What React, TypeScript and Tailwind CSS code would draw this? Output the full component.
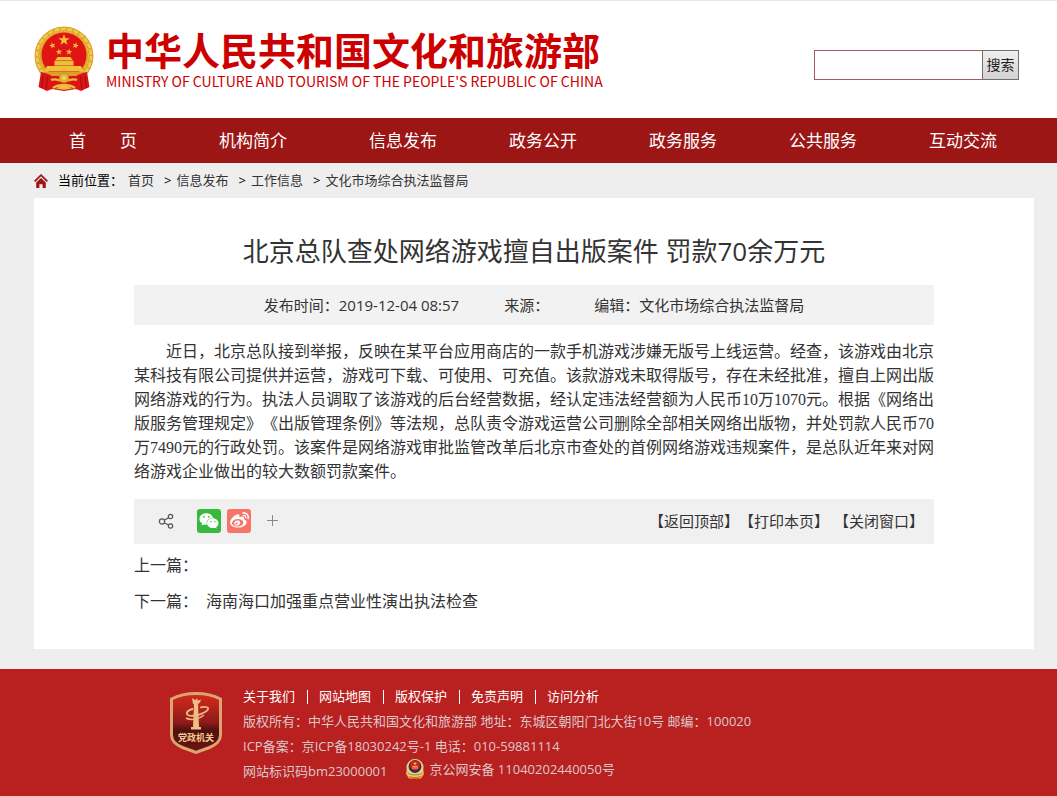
import React from "react";
import { FaWeibo, FaWeixin } from "react-icons/fa";

const NAV_ITEMS = [
  { label: "首　　页", wide: true },
  { label: "机构简介", wide: true },
  { label: "信息发布", wide: false },
  { label: "政务公开", wide: false },
  { label: "政务服务", wide: false },
  { label: "公共服务", wide: false },
  { label: "互动交流", wide: false },
];

const CRUMBS = ["首页", "信息发布", "工作信息", "文化市场综合执法监督局"];

const FOOTER_LINKS = ["关于我们", "网站地图", "版权保护", "免责声明", "访问分析"];

const STAR = "M0-10 2.4-3.1 9.5-3.1 3.8 1.2 5.9 8.1 0 4-5.9 8.1-3.8 1.2-9.5-3.1-2.4-3.1Z";

const NationalEmblem: React.FC = () => (
  <svg viewBox="0 0 60 66" className="h-[66px] w-[60px] shrink-0" aria-hidden="true">
    <circle cx="30" cy="30" r="29.5" fill="#dda52c" />
    <circle cx="30" cy="30" r="27" fill="none" stroke="#f0c84e" strokeWidth="2.600" strokeDasharray="5 1.500" />
    <circle cx="30" cy="30" r="24.500" fill="none" stroke="#e9b93d" strokeWidth="1.200" strokeDasharray="3 2" />
    <circle cx="30" cy="29" r="22.500" fill="#e21313" />
    <g fill="#f0c03a">
      <path d={STAR} transform="translate(30 14) scale(.6)" />
      <path d={STAR} transform="translate(18.500 19.500) rotate(-15) scale(.34)" />
      <path d={STAR} transform="translate(41.500 19.500) rotate(15) scale(.34)" />
      <path d={STAR} transform="translate(25 26) rotate(-8) scale(.34)" />
      <path d={STAR} transform="translate(35 26) rotate(8) scale(.34)" />
      <path d="M23.500 31h13l2.500 3.500H21z" />
      <path d="M20.500 35h19v4.500h-19z" />
      <path d="M13 40h34l2.500 5.500h-39z" />
    </g>
    <path d="M21 34.800h18M20 39.500h20" stroke="#c8891c" strokeWidth=".6" />
    <path d="M11 46h38v5H11z" fill="#d9a02a" />
    <path d="M7 46c5 1 8 2 11 4h24c3-2 6-3 11-4l2.500 15-8.500 4-5-2-12 2-12-2-5 2-8.500-4z" fill="#da1515" />
    <path d="M9 50l-1.500 12M14 50l-2 13M51 50l1.500 12M46 50l2 13" stroke="#ac0d0d" strokeWidth="1.100" />
    <path d="M17 54c5-2 8 1 13 1s8-3 13-1M19 62c3-2 6-3 11-3s8 1 11 3" fill="none" stroke="#ecbb3b" strokeWidth="2.400" />
    <circle cx="30" cy="52" r="4.800" fill="#e7b434" stroke="#be8118" strokeWidth=".6" />
    <circle cx="30" cy="52" r="1.700" fill="#f7dc7c" />
    <path d="M22 62.500c3-2 5-3 8-3s5 1 8 3c-5 1.500-11 1.500-16 0z" fill="#efc041" />
  </svg>
);

const PartyBadge: React.FC = () => (
  <svg viewBox="0 0 52 62" className="mt-2 h-[62px] w-[52px] shrink-0" role="img" aria-label="党政机关">
    <defs>
      <linearGradient id="shield" x1="0" y1="0" x2="0" y2="1">
        <stop offset="0" stopColor="#d62a1c" />
        <stop offset=".5" stopColor="#8e1a1a" />
        <stop offset=".62" stopColor="#4f1111" />
        <stop offset="1" stopColor="#6e1414" />
      </linearGradient>
    </defs>
    <path
      d="M26 1.5C34 1.5 43 3 50.5 7v36c0 7-5 10-11 12.500-5 2-9 3-13.500 5-4.500-2-8.500-3-13.500-5-6-2.500-11-5.500-11-12.500V7C9 3 18 1.500 26 1.500Z"
      fill="url(#shield)"
      stroke="#dba56f"
      strokeWidth="3"
    />
    <g fill="#edbd84">
      <path d="M24 11h4l1 24h-6z" />
      <path d="M22 6l3 2 2-1.500 1 2 3-1-1 3-2 1.500h-5z" />
      <path d="M21 35h10v2.500H21z" />
    </g>
    <path
      d="M23 17c-3 0-7 3-6 5 1 3 11 2 16-1 5-2 7-5 3-6-2-.5-4 0-6 .5"
      fill="none"
      stroke="#edbd84"
      strokeWidth="1.800"
    />
    <path d="M16 26c5 3 14 1 18-3" fill="none" stroke="#edbd84" strokeWidth="1.500" />
    <text
      x="26"
      y="49"
      textAnchor="middle"
      fill="#f4c98f"
      className="font-['Noto_Sans_CJK_SC',sans-serif] text-[9px] font-bold"
    >
      党政机关
    </text>
  </svg>
);

const PoliceBadge: React.FC = () => (
  <svg viewBox="0 0 20 20" className="h-5 w-5" aria-hidden="true">
    <path d="M2 9 1 15l3 4.500h12l3-4.500-1-6z" fill="#e8b653" />
    <circle cx="10" cy="8.500" r="8.500" fill="#f1cf82" />
    <circle cx="10" cy="7.500" r="6.400" fill="#27305f" />
    <circle cx="10" cy="6.500" r="4.800" fill="#dc2418" />
    <path d={STAR} transform="translate(10 4.500) scale(.18)" fill="#f7d358" />
    <path d="M7.500 7.500h5M7 9h6" stroke="#f7d358" strokeWidth=".8" />
    <path d="M3 13c3 3 11 3 14 0v4c-4 2-10 2-14 0z" fill="#efc56c" />
    <path d="M3 14c3 2.500 11 2.500 14 0M4 17.500c4 1.500 8 1.500 12 0" fill="none" stroke="#a96d1e" strokeWidth=".8" />
  </svg>
);

const HomeIcon: React.FC = () => (
  <svg viewBox="0 0 14 14" className="mr-[10px] h-[14px] w-[14px]" aria-hidden="true">
    <path d="M.6 7.400 7 1.200l6.400 6.200" fill="none" stroke="#a01616" strokeWidth="1.800" />
    <path d="M2.200 8.500 7 4l4.800 4.500V14H8.600v-3.800H5.400V14H2.200z" fill="#a01616" />
  </svg>
);

const ShareIcon: React.FC = () => (
  <svg viewBox="0 0 16 16" className="h-4 w-4" fill="none" stroke="#555" strokeWidth="1.200" aria-hidden="true">
    <circle cx="4" cy="8.500" r="2.600" />
    <circle cx="12.500" cy="3.500" r="2.200" />
    <circle cx="12.500" cy="13" r="2.200" />
    <path d="M6.300 7.200l4.200-2.500M6.300 9.800l4.200 2.200" />
  </svg>
);

const Header: React.FC = () => (
  <header className="flex h-[118px] items-start justify-between border-t border-[#e8e8e8] bg-white pr-[38px] pl-[34px]">
    <a href="#" className="mt-[25px] flex text-[#cc0000]">
      <NationalEmblem />
      <span className="ml-3 block font-['Noto_Sans_CJK_SC',sans-serif] whitespace-nowrap">
        <span className="block text-[38px] leading-[46px] font-bold">中华人民共和国文化和旅游部</span>
        <span className="block text-sm leading-[18px]">
          MINISTRY OF CULTURE AND TOURISM OF THE PEOPLE'S REPUBLIC OF CHINA
        </span>
      </span>
    </a>
    <form className="mt-[49px] flex" onSubmit={(e) => e.preventDefault()}>
      <input
        type="text"
        aria-label="搜索"
        className="h-[30px] w-[168px] border border-r-0 border-[#a85a60] bg-white px-2 text-sm outline-none"
      />
      <button
        type="submit"
        className="h-[30px] w-[37px] border border-[#707070] bg-linear-to-b from-[#f0f0f0] to-[#d2d2d2] text-sm text-[#222]"
      >
        搜索
      </button>
    </form>
  </header>
);

const Nav: React.FC = () => (
  <nav className="bg-[#9c1616] pr-[23px] pl-[34px]">
    <ul className="flex h-[45px] items-center gap-[72px] pl-[35px] text-[17px] whitespace-nowrap text-white">
      {NAV_ITEMS.map((item) => (
        <li key={item.label} className={item.wide ? "mr-[10px]" : ""}>
          <a href="#">{item.label}</a>
        </li>
      ))}
    </ul>
  </nav>
);

const Breadcrumb: React.FC = () => (
  <div className="flex h-[35px] items-center text-[13px] whitespace-nowrap text-black">
    <HomeIcon />
    <span className="mr-[5px]">当前位置：</span>
    {CRUMBS.map((crumb, i) => (
      <React.Fragment key={crumb}>
        {i > 0 && <span className="mr-[5px] ml-[10px]">&gt;</span>}
        <a href="#" className="text-[#333]">
          {crumb}
        </a>
      </React.Fragment>
    ))}
  </div>
);

const ShareBar: React.FC = () => (
  <div className="mt-[15px] flex h-[45px] items-center justify-between bg-[#f0f0f0] pr-[10px] pl-6">
    <div className="flex items-center pb-0.5">
      <button type="button" aria-label="分享">
        <ShareIcon />
      </button>
      <button
        type="button"
        aria-label="微信"
        className="ml-[23px] flex h-6 w-6 items-center justify-center rounded-[3px] bg-[#36b93d] text-white"
      >
        <FaWeixin size={20} />
      </button>
      <button
        type="button"
        aria-label="微博"
        className="ml-[6px] flex h-6 w-6 items-center justify-center rounded-[3px] bg-[#f77567] text-white"
      >
        <FaWeibo size={19} />
      </button>
      <button type="button" aria-label="更多" className="ml-4">
        <svg viewBox="0 0 11 11" className="h-[11px] w-[11px]" stroke="#888" aria-hidden="true">
          <path d="M5.500 0v11M0 5.500h11" />
        </svg>
      </button>
    </div>
    <div className="flex text-[15px]">
      <button type="button">【返回顶部】</button>
      <button type="button">【打印本页】</button>
      <button type="button" className="ml-[5px]">
        【关闭窗口】
      </button>
    </div>
  </div>
);

const Article: React.FC = () => (
  <main className="bg-white px-[100px] pt-[34px] pb-[30px] text-[#333]">
    <h1 className="text-center text-[26px] leading-[38px]">北京总队查处网络游戏擅自出版案件 罚款70余万元</h1>
    <div className="mt-[15px] flex h-10 items-center justify-center gap-[45px] bg-[#f2f2f2] text-[15px]">
      <span>发布时间：2019-12-04 08:57</span>
      <span>来源：</span>
      <span>编辑：文化市场综合执法监督局</span>
    </div>
    <p className="mt-[15px] text-justify indent-8 font-['Liberation_Serif','Noto_Sans_CJK_SC',serif] text-base leading-6">
      近日，北京总队接到举报，反映在某平台应用商店的一款手机游戏涉嫌无版号上线运营。经查，该游戏由北京某科技有限公司提供并运营，游戏可下载、可使用、可充值。该款游戏未取得版号，存在未经批准，擅自上网出版网络游戏的行为。执法人员调取了该游戏的后台经营数据，经认定违法经营额为人民币10万1070元。根据《网络出版服务管理规定》《出版管理条例》等法规，总队责令游戏运营公司删除全部相关网络出版物，并处罚款人民币70万7490元的行政处罚。该案件是网络游戏审批监管改革后北京市查处的首例网络游戏违规案件，是总队近年来对网络游戏企业做出的较大数额罚款案件。
    </p>
    <ShareBar />
    <div className="mt-[3px] text-base leading-9">
      <p>上一篇：</p>
      <p>
        下一篇：
        <a href="#" className="ml-2">
          海南海口加强重点营业性演出执法检查
        </a>
      </p>
    </div>
  </main>
);

const Footer: React.FC = () => (
  <footer className="mt-5 flex bg-[#b92020] pt-[15px] pb-3 pl-[170px] text-[13px] leading-[25px] whitespace-nowrap text-[#d9c9c9]">
    <PartyBadge />
    <div className="ml-[21px]">
      <ul className="flex items-center text-white">
        {FOOTER_LINKS.map((link, i) => (
          <li key={link} className="flex items-center">
            {i > 0 && <span className="mr-[11px] ml-3 h-[14px] w-px bg-white" />}
            <a href="#">{link}</a>
          </li>
        ))}
      </ul>
      <p>版权所有：中华人民共和国文化和旅游部 地址：东城区朝阳门北大街10号 邮编：100020</p>
      <p>ICP备案：京ICP备18030242号-1 电话：010-59881114</p>
      <div className="flex">
        <span>网站标识码bm23000001</span>
        <a href="#" className="ml-[18px] flex h-5 items-center gap-1">
          <PoliceBadge />
          京公网安备 11040202440050号
        </a>
      </div>
    </div>
  </footer>
);

const App: React.FC = () => {
  return (
    <div className="min-h-screen bg-[#eeeeee] font-['Open_Sans','Noto_Sans_CJK_SC',sans-serif] [text-spacing-trim:space-all]">
      <Header />
      <Nav />
      <div className="pr-[23px] pl-[34px]">
        <Breadcrumb />
        <Article />
      </div>
      <Footer />
    </div>
  );
};

export default App;
